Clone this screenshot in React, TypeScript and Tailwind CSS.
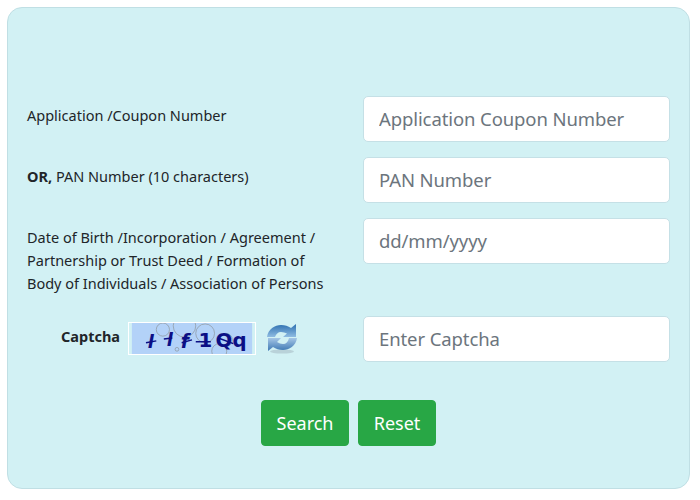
const font = "font-['Noto_Sans','Open_Sans',sans-serif]";

function Field({ placeholder }: { placeholder: string }) {
  return (
    <input
      placeholder={placeholder}
      className="w-[307px] h-[46px] shrink-0 bg-white border border-[#c5e0e6] rounded-[5px] px-[15px] pb-[2px] text-[18.5px] tracking-[-0.1px] text-[#495057] placeholder:text-[#6c757d] outline-none"
    />
  );
}

function Captcha() {
  return (
    <svg width="128" height="33" viewBox="0 0 128 33" className="block border border-white box-border">
      <rect width="128" height="33" fill="#b3d2f8" />
      <g fill="none" stroke="#8f9aa3" strokeWidth="0.8">
        <circle cx="33" cy="7" r="7" />
        <circle cx="56" cy="3" r="12" />
        <circle cx="78" cy="11" r="10" />
        <circle cx="48" cy="28" r="2" />
        <circle cx="100" cy="18" r="7" />
        <circle cx="93" cy="30" r="8" />
      </g>
      <g fill="#0b0f85" fontFamily="'DejaVu Sans',sans-serif" fontWeight="700" fontStyle="italic">
        <text x="17" y="27" fontSize="19">l</text>
        <text x="37" y="25" fontSize="19">l</text>
        <text x="52" y="27" fontSize="20">f</text>
      </g>
      <g fill="#0b0f85" fontFamily="'DejaVu Sans',sans-serif" fontWeight="700">
        <text x="71" y="26" fontSize="21">1</text>
        <text x="89" y="26" fontSize="21">Q</text>
        <text x="107" y="26" fontSize="21">q</text>
      </g>
      <path d="M15 21L26 19M34 17L43 16M53 21L64 18M68 20H84M92 16L108 22" stroke="#0b0f85" strokeWidth="1.5" />
    </svg>
  );
}

function Refresh() {
  return (
    <svg width="30" height="30" viewBox="0 0 30 30" className="block">
      <defs>
        <linearGradient id="a" x1="0" y1="0" x2="0" y2="1">
          <stop offset="0" stopColor="#2c6fb0" />
          <stop offset="1" stopColor="#8fbce2" />
        </linearGradient>
        <linearGradient id="b" x1="0" y1="0" x2="0" y2="1">
          <stop offset="0" stopColor="#a5c6e6" />
          <stop offset="1" stopColor="#3d78b3" />
        </linearGradient>
      </defs>
      <ellipse cx="15" cy="27.5" rx="12" ry="2" fill="#9fb4bd" opacity="0.5" />
      <path d="M0 13C1 5 8 1 14 1C18 1 21 2 24 4L29 0V13H16L20 9.5C18 8.5 16 8 14 8C11 8 9 10 8 13Z" fill="url(#a)" />
      <path d="M30 14C29 22 22 26 16 26C12 26 9 25 6 23L1 27V14H14L10 18C12 19 14 20 16 20C19 20 21 18 22 14Z" fill="url(#b)" />
    </svg>
  );
}

export default function App() {
  return (
    <div className={`w-[700px] h-[500px] bg-white pt-[7px] pl-[7px] overflow-hidden ${font}`}>
      <div className="w-[683px] h-[482px] bg-[#d2f1f4] border border-[#c0dfe4] rounded-[15px] pt-[88px] pl-[19px] text-[14.5px] leading-[23px] text-[#212529]">
        <div className="flex mb-[15px]">
          <div className="w-[336px] pt-[8px]">Application /Coupon Number</div>
          <Field placeholder="Application Coupon Number" />
        </div>
        <div className="flex mb-[15px]">
          <div className="w-[336px] pt-[8px]">
            <b>OR,</b> PAN Number (10 characters)
          </div>
          <Field placeholder="PAN Number" />
        </div>
        <div className="flex mb-[15px]">
          <div className="w-[336px] pt-[8px] pr-[30px] pb-[6px]">
            Date of Birth /Incorporation / Agreement / Partnership or Trust Deed / Formation of Body of Individuals / Association of Persons
          </div>
          <Field placeholder="dd/mm/yyyy" />
        </div>
        <div className="flex">
          <div className="w-[336px] flex pl-[34px] pt-[6px] items-start">
            <b className="w-[67px] leading-[28px]">Captcha</b>
            <Captcha />
            <div className="ml-[11px] mt-[2px]">
              <Refresh />
            </div>
          </div>
          <Field placeholder="Enter Captcha" />
        </div>
        <div className="flex pl-[234px] gap-[9px] mt-[38px]">
          <button className="w-[88px] h-[46px] bg-[#28a745] border border-[#28a745] rounded-[4px] text-white text-[18px]">Search</button>
          <button className="w-[78px] h-[46px] bg-[#28a745] border border-[#28a745] rounded-[4px] text-white text-[18px]">Reset</button>
        </div>
      </div>
    </div>
  );
}
